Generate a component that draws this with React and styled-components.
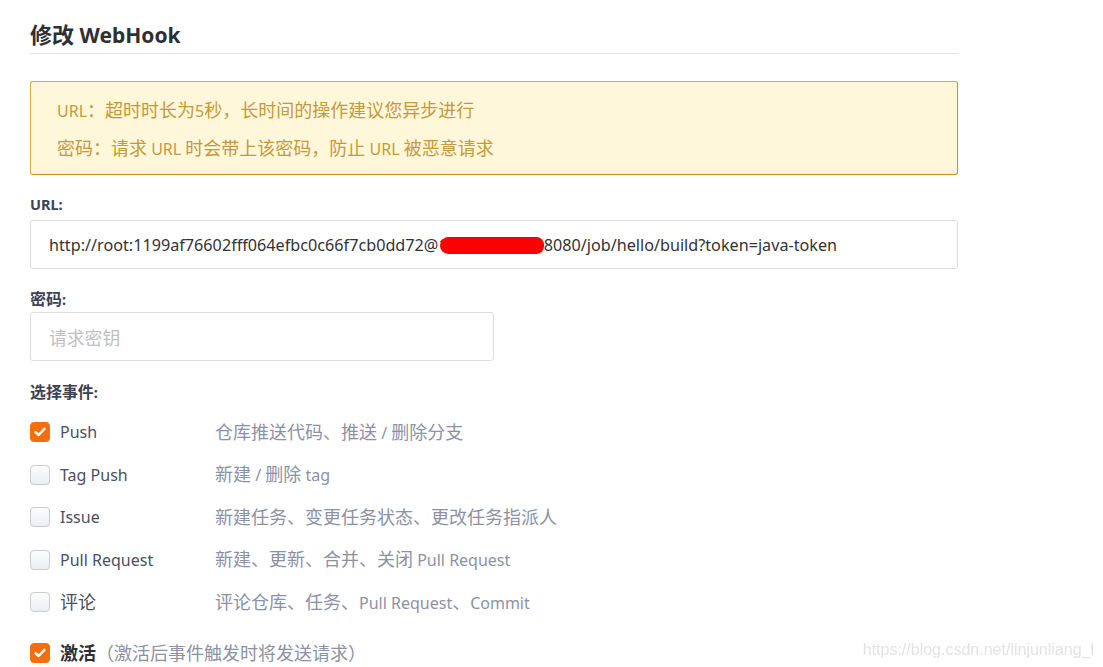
import styled, { createGlobalStyle } from 'styled-components'

const GlobalStyle = createGlobalStyle`
  html, body {
    margin: 0;
    background: #fff;
  }
  body {
    font-family: "Noto Sans", "Noto Sans CJK SC", sans-serif;
    color: #40485b;
  }
`

// CJK runs render a little larger than the Latin text around them
const Han = styled.span`
  font-size: ${(p) => p.$size || '1.125em'};
`

const mix = (text, size) =>
  text.split(/([\u3000-\u303f\u4e00-\u9fff\uff00-\uffef]+)/).map((part, i) =>
    i % 2 ? (
      <Han key={i} $size={size}>
        {part}
      </Han>
    ) : (
      part
    )
  )

const Page = styled.div`
  width: 928px;
  padding: 18px 0 0 30px;
  height: 649px;
  overflow: hidden;
`

const Title = styled.h2`
  margin: 0;
  font-size: 21px;
  font-weight: 700;
  color: #2d2f33;
  line-height: 32px;
  padding-bottom: 2px;
  border-bottom: 1px solid #e3e3e6;
`

const Alert = styled.div`
  margin-top: 27px;
  background: #fff7d9;
  border: 1px solid #d3aa48;
  border-bottom-color: #c4942a;
  border-right-color: #c4942a;
  border-radius: 3px;
  padding: 10px 26px 6px;
  color: #c39a3b;
  font-size: 16px;
  line-height: 37px;
`

const Label = styled.div`
  margin-top: ${(p) => p.$top || 20}px;
  font-size: 14.5px;
  font-weight: 700;
  color: #3c4252;
  line-height: 20px;
`

const Field = styled.div`
  margin-top: ${(p) => p.$gap || 5}px;
  width: ${(p) => p.$width};
  height: 49px;
  box-sizing: border-box;
  border: 1px solid #dcdee4;
  border-radius: 3px;
  display: flex;
  align-items: center;
  padding: 0 18px;
  font-size: 16.2px;
  color: ${(p) => (p.$placeholder ? '#c0c0c4' : '#333')};
  white-space: nowrap;
`

const Redact = styled.span`
  display: inline-block;
  width: 104px;
  height: 17px;
  margin: 1px 0 0 -8px;
  background: #ff0000;
  border-radius: 9px 8px 8px 9px;
`

const Events = styled.div`
  margin-top: 20px;
  display: flex;
  flex-direction: column;
  gap: 22.5px;
`

const Row = styled.div`
  display: flex;
  align-items: center;
  height: 20px;
  font-size: 16px;
  line-height: 20px;
`

const Box = styled.span`
  width: 20px;
  height: 20px;
  flex: none;
  box-sizing: border-box;
  border-radius: 4px;
  border: 1px solid ${(p) => (p.$on ? '#f66d0c' : '#c9cbd1')};
  background: ${(p) => (p.$on ? '#f66d0c' : 'linear-gradient(#fdfdfe, #eceef2)')};
  display: flex;
  align-items: center;
  justify-content: center;
  margin-right: 10px;
`

const Name = styled.span`
  width: 155px;
  flex: none;
  color: #4a505e;
`

const Strong = styled.span`
  color: #2d2f33;
  font-weight: 700;
`

const Desc = styled.span`
  color: #8c92a4;
`

const Active = styled(Row)`
  margin-top: 31px;
`

const Watermark = styled.div`
  position: fixed;
  right: 9px;
  bottom: 8px;
  font-family: Arial, "Liberation Sans", sans-serif;
  font-size: 16px;
  color: #e3e3e3;
`

const Check = () => (
  <svg width="12" height="10" viewBox="0 0 12 10">
    <path
      d="M1.6 5.3 L4.7 8 L10.4 1.9"
      fill="none"
      stroke="#fff"
      strokeWidth="2.5"
      strokeLinecap="round"
      strokeLinejoin="round"
    />
  </svg>
)

const events = [
  { name: 'Push', desc: '仓库推送代码、推送 / 删除分支', on: true },
  { name: 'Tag Push', desc: '新建 / 删除 tag' },
  { name: 'Issue', desc: '新建任务、变更任务状态、更改任务指派人' },
  { name: 'Pull Request', desc: '新建、更新、合并、关闭 Pull Request' },
  { name: '评论', desc: '评论仓库、任务、Pull Request、Commit' },
]

export default function App() {
  return (
    <>
      <GlobalStyle />
      <Page>
        <Title>{mix('修改 WebHook', '1.05em')}</Title>
        <Alert>
          <div>{mix('URL：超时时长为5秒，长时间的操作建议您异步进行')}</div>
          <div>{mix('密码：请求 URL 时会带上该密码，防止 URL 被恶意请求')}</div>
        </Alert>
        <Label $top={19}>URL:</Label>
        <Field $width="928px" $gap={6}>
          http://root:1199af76602fff064efbc0c66f7cb0dd72@1
          <Redact />
          8080/job/hello/build?token=java-token
        </Field>
        <Label $top={20}>{mix('密码:', '1.1em')}</Label>
        <Field $width="464px" $gap={3} $placeholder>
          {mix('请求密钥', '1.1em')}
        </Field>
        <Label $top={21}>{mix('选择事件:', '1.1em')}</Label>
        <Events>
          {events.map((e) => (
            <Row key={e.name}>
              <Box $on={e.on}>{e.on && <Check />}</Box>
              <Name>{mix(e.name)}</Name>
              <Desc>{mix(e.desc)}</Desc>
            </Row>
          ))}
        </Events>
        <Active>
          <Box $on>
            <Check />
          </Box>
          <Strong>{mix('激活')}</Strong>
          <Desc>{mix('（激活后事件触发时将发送请求）')}</Desc>
        </Active>
      </Page>
      <Watermark>https://blog.csdn.net/linjunliang_l</Watermark>
    </>
  )
}
